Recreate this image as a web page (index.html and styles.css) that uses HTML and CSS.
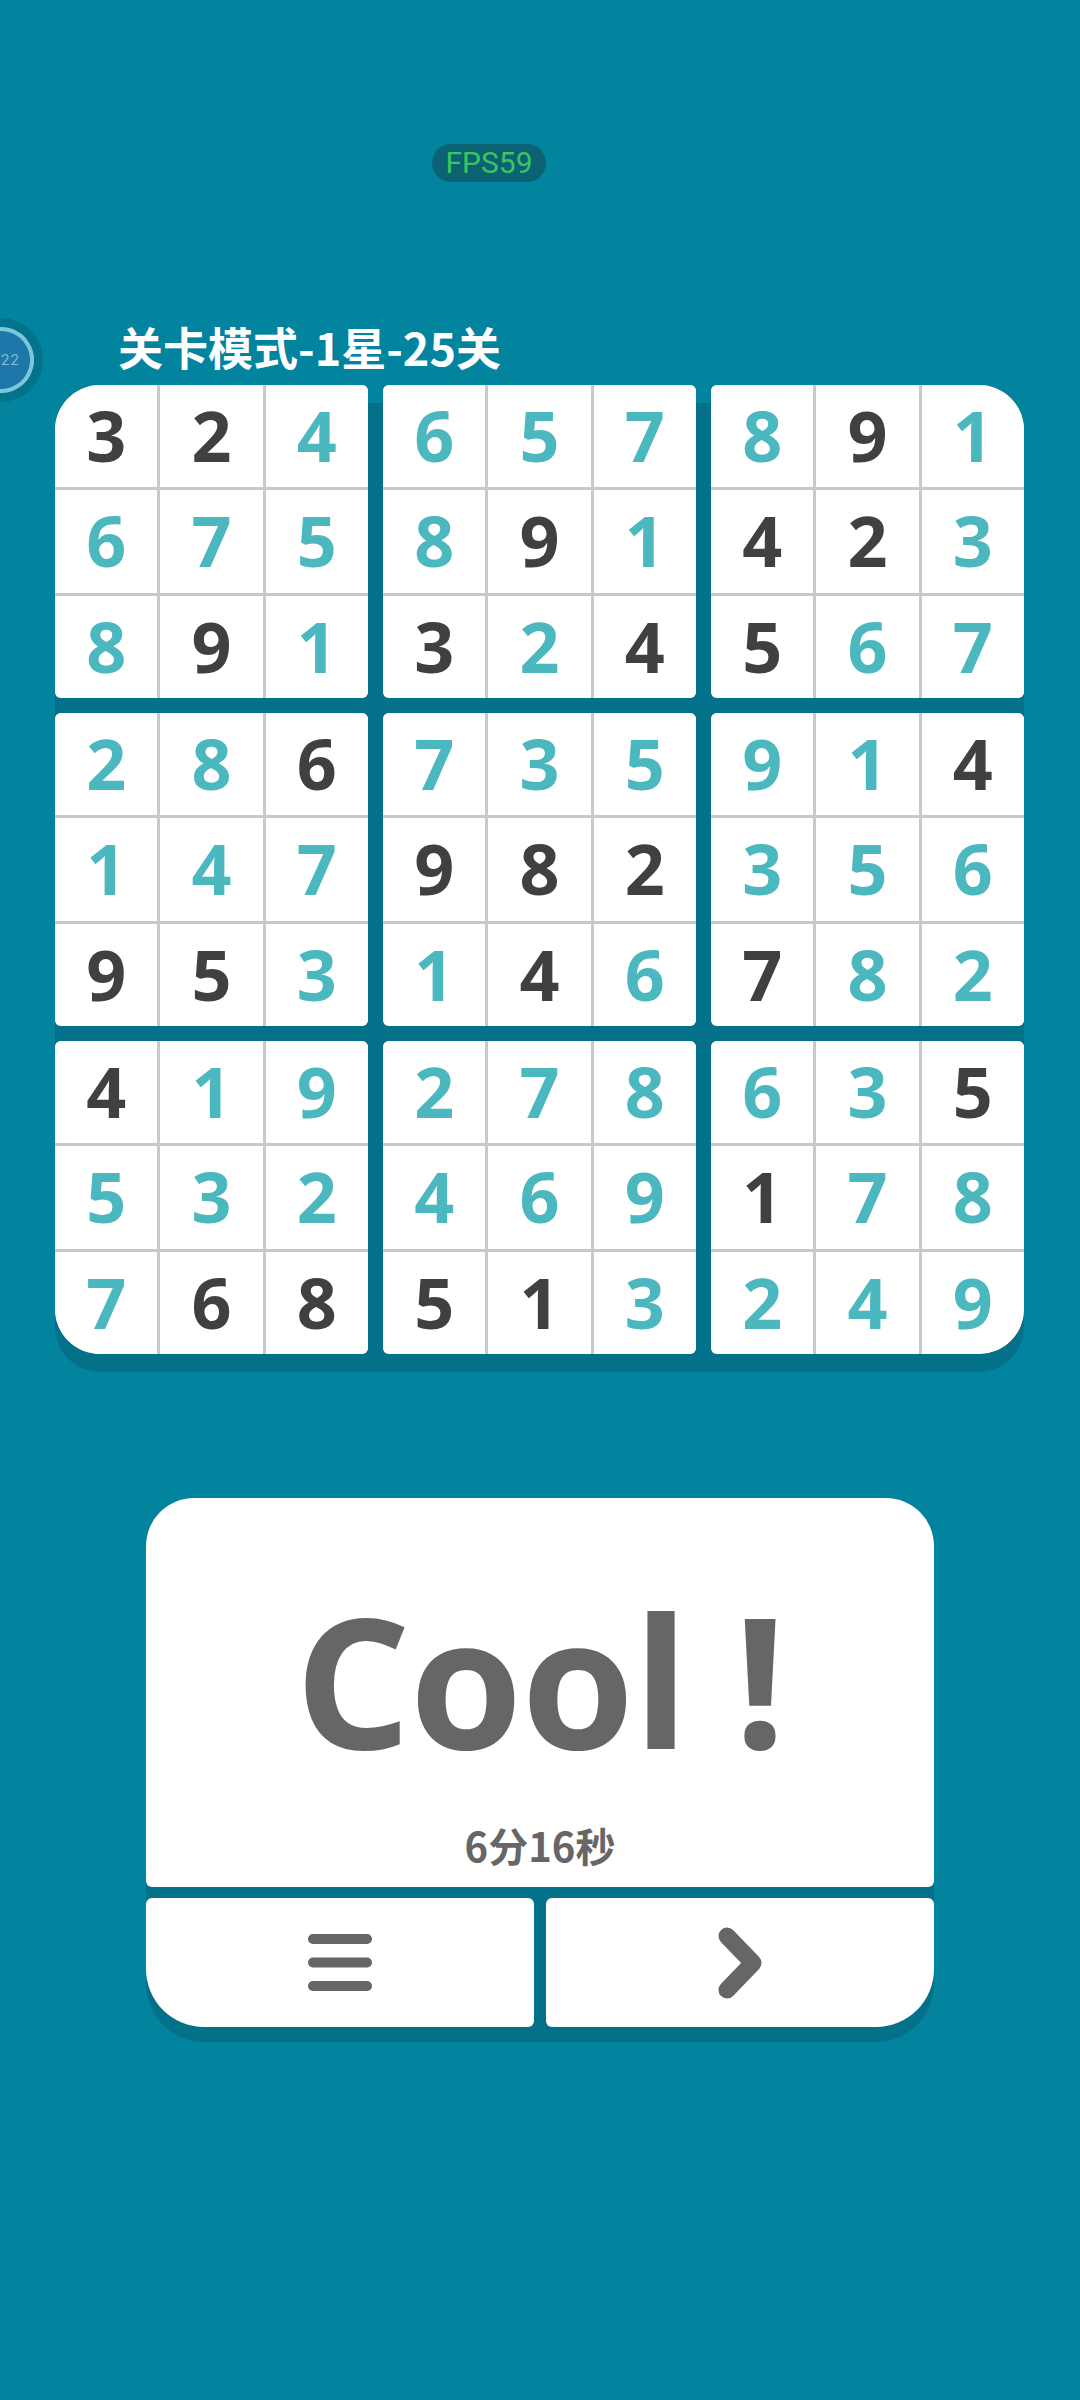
FILE: index.html
```html
<!DOCTYPE html>
<html lang="zh-CN">
<head>
  <meta charset="UTF-8" />
  <meta name="viewport" content="width=device-width, initial-scale=1.0" />
  <title>数独 - 关卡模式</title>
  <link rel="stylesheet" href="styles.css">
</head>
<body>
  <div class="timer-ring">
    <svg width="84" height="84" viewBox="0 0 84 84">
      <circle cx="42" cy="42" r="42" fill="#03728c" />
      <circle cx="42" cy="42" r="33" fill="#1c78a9" />
      <circle cx="42" cy="42" r="31" fill="none" stroke="#7cc8da" stroke-width="4"
              stroke-dasharray="180 15" transform="rotate(-120 42 42)" />
    </svg>
    <span class="ring-num">22</span>
  </div>

  <div class="fps-row">
    <div class="fps">FPS59</div>
  </div>

  <h1 class="level-title">关卡模式-1星-25关</h1>

  <div class="board" id="board"></div>

  <div class="result">
    <div class="result-main">
      <div class="cool">Cool !</div>
      <div class="time">6分16秒</div>
    </div>
    <div class="actions">
      <button type="button" class="btn btn-menu" aria-label="菜单">
        <svg width="64" height="57" viewBox="0 0 64 57">
          <rect x="0" y="0" width="64" height="10" rx="5" fill="#666" />
          <rect x="0" y="23.5" width="64" height="10" rx="5" fill="#666" />
          <rect x="0" y="47" width="64" height="10" rx="5" fill="#666" />
        </svg>
      </button>
      <button type="button" class="btn btn-next" aria-label="下一关">
        <svg width="46" height="74" viewBox="0 0 46 74">
          <path d="M10 10 L36 37 L10 64" fill="none" stroke="#666" stroke-width="17"
                stroke-linecap="round" stroke-linejoin="round" />
        </svg>
      </button>
    </div>
  </div>

  <script>
    const rows = [
      '324657891', '675891423', '891324567',
      '286735914', '147982356', '953146782',
      '419278635', '532469178', '768513249'
    ];
    // 1 = given digit (dark), 0 = filled in by player (teal)
    const given = [
      '110000010', '000010110', '010101100',
      '001000001', '000111000', '110010100',
      '100000001', '000000100', '011110000'
    ];
    const corners = { 0: 'tl', 2: 'tr', 6: 'bl', 8: 'br' };

    const board = document.getElementById('board');
    for (let b = 0; b < 9; b++) {
      const block = document.createElement('div');
      block.className = 'block' + (corners[b] ? ' ' + corners[b] : '');
      const br = Math.floor(b / 3), bc = b % 3;
      for (let i = 0; i < 9; i++) {
        const r = br * 3 + Math.floor(i / 3);
        const c = bc * 3 + (i % 3);
        const cell = document.createElement('div');
        cell.className = 'cell ' + (given[r][c] === '1' ? 'given' : 'filled');
        cell.textContent = rows[r][c];
        block.appendChild(cell);
      }
      board.appendChild(block);
    }
  </script>
</body>
</html>
```

FILE: styles.css
```css
body { margin: 0; width: 1080px; height: 2400px; overflow: hidden; background: #02849f; font-family: "Noto Sans CJK SC", sans-serif; position: relative; }

.timer-ring { position: absolute; left: -41px; top: 318px; width: 84px; height: 84px; }
.timer-ring svg { display: block; }
.ring-num { position: absolute; left: 42px; top: 30px; font: 15px/24px Roboto, sans-serif; color: #86b9cf; letter-spacing: 1px; }

.fps-row { display: flex; padding: 144px 0 0 432px; }
.fps { width: 114px; height: 38px; border-radius: 19px; background: #0a6273; color: #3dc45f; font: 30px/38px Roboto, sans-serif; text-align: center; }

.level-title { margin: 138px 0 0 118px; font: bold 45px/54px "Noto Sans CJK SC", sans-serif; color: #fff; }

.board { margin: 11px 0 0 55px; width: 969px; display: grid; grid-template-columns: repeat(3, 313px); grid-auto-rows: 313px; gap: 15px; padding-bottom: 18px; border-radius: 45px; background: linear-gradient(transparent 18px, #03718a 18px); }
.block { display: grid; grid-template-columns: repeat(3, 1fr); grid-template-rows: repeat(3, 1fr); gap: 3px; background: #c9c9c9; border-radius: 6px; overflow: hidden; }
.block.tl { border-top-left-radius: 45px; }
.block.tr { border-top-right-radius: 45px; }
.block.bl { border-bottom-left-radius: 45px; }
.block.br { border-bottom-right-radius: 45px; }
.cell { background: #fff; display: flex; align-items: center; justify-content: center; padding-bottom: 2px; font: 700 70px/1 "Open Sans", sans-serif; }
.cell.given { color: #404040; }
.cell.filled { color: #4bb7be; }

.result { margin: 126px 0 0 146px; width: 788px; padding-bottom: 15px; border-radius: 48px 48px 58px 58px; background: linear-gradient(transparent 15px, #03718a 15px); }
.result-main { height: 389px; background: #fff; border-radius: 48px 48px 6px 6px; text-align: center; color: #666; }
.cool { padding-top: 89px; font: bold 182px/182px "Open Sans", sans-serif; letter-spacing: -1px; }
.time { margin-top: 52px; font: bold 40px/48px "Noto Sans CJK SC", sans-serif; }
.actions { display: flex; gap: 12px; margin-top: 11px; }
.btn { flex: 1; height: 129px; border: 0; padding: 0; background: #fff; border-radius: 6px; display: flex; align-items: center; justify-content: center; cursor: pointer; }
.btn-menu { border-bottom-left-radius: 58px; }
.btn-next { border-bottom-right-radius: 58px; }
```
